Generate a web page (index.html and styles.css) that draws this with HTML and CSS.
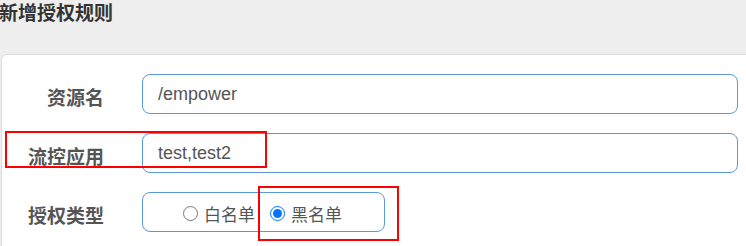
FILE: index.html
```html
<!DOCTYPE html>
<html>

<head>
    <meta charset="utf-8">
    <title>新增授权规则</title>
    <link rel="stylesheet" href="styles.css">
</head>

<body>
    <div class="page-header">
        <h3 class="page-title">新增授权规则</h3>
    </div>

    <div class="card">
        <form class="rule-form">
            <label class="form-label">资源名</label>
            <input type="text" class="form-input" value="/empower">

            <label class="form-label">流控应用</label>
            <input type="text" class="form-input" value="test,test2">

            <label class="form-label">授权类型</label>
            <div class="radio-group">
                <label class="radio-item">
                    <input type="radio" name="strategy" value="0">
                    白名单
                </label>
                <label class="radio-item">
                    <input type="radio" name="strategy" value="1" checked>
                    黑名单
                </label>
            </div>
        </form>
    </div>

    <!-- annotation boxes -->
    <div class="mark mark-app"></div>
    <div class="mark mark-type"></div>
</body>
</html>
```

FILE: styles.css
```css
html,
body {
    margin: 0;
    padding: 0;
    height: 246px;
    overflow: hidden;
}

body {
    position: relative;
    background: #eeeeee;
    font-family: "Liberation Sans", "Noto Sans CJK SC", sans-serif;
    color: #555;
}

.page-header {
    height: 54px;
}

.page-title {
    margin: 0;
    font-size: 19px;
    line-height: 28px;
    font-weight: bold;
    color: #333;
    text-indent: -1px;
}

.card {
    margin-left: 1px;
    width: 780px;
    height: 192px;
    background: #fff;
    border: 1px solid #dcdcdc;
    border-bottom: 0;
    border-radius: 6px 6px 0 0;
}

.rule-form {
    display: grid;
    grid-template-columns: 102px 596px;
    grid-auto-rows: 40px;
    column-gap: 38px;
    row-gap: 19px;
    padding-top: 19px;
}

.form-label {
    align-self: center;
    padding-top: 5px;
    text-align: right;
    font-size: 19px;
    font-weight: 600;
    color: #555;
}

.form-input {
    box-sizing: border-box;
    height: 40px;
    margin: 0;
    padding: 0 15px;
    border: 1px solid #5a98d8;
    border-radius: 8px;
    font-family: "Liberation Sans", "Noto Sans CJK SC", sans-serif;
    font-size: 18px;
    color: #555;
    outline: none;
}

.radio-group {
    box-sizing: border-box;
    width: 243px;
    height: 40px;
    display: flex;
    align-items: center;
    gap: 15px;
    padding: 3px 0 0 40px;
    border: 1px solid #5a98d8;
    border-radius: 8px;
}

.radio-item {
    display: flex;
    align-items: center;
    gap: 6px;
    font-family: "Noto Sans CJK SC", sans-serif;
    font-size: 17px;
    color: #555;
}

.radio-item input {
    width: 15px;
    height: 15px;
    margin: 0;
}

.mark {
    position: absolute;
    box-sizing: border-box;
    border: 2px solid #f00;
}

.mark-app {
    left: 5px;
    top: 131px;
    width: 262px;
    height: 37px;
}

.mark-type {
    left: 258px;
    top: 186px;
    width: 141px;
    height: 55px;
}
```
